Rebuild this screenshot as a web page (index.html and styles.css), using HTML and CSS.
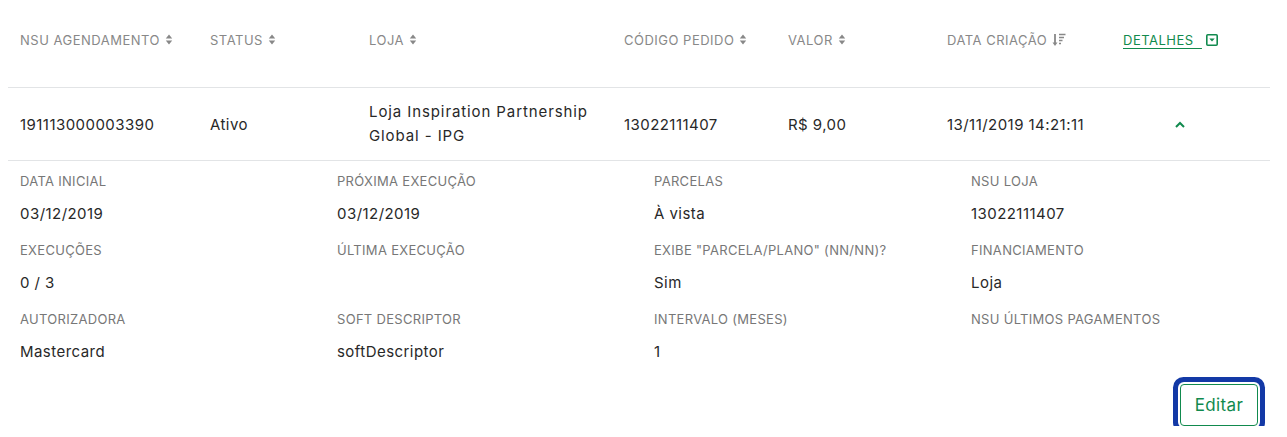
FILE: index.html
```html
<!DOCTYPE html>
<html lang="pt-BR">
<head>
<meta charset="utf-8">
<title>Agendamentos</title>
<link rel="stylesheet" href="styles.css">
</head>
<body>
<div class="table">
  <div class="row head">
    <div class="cell c1">NSU AGENDAMENTO <svg class="sort" viewBox="0 0 8 12"><path d="M4 0.5L7.5 5H0.5Z M4 11.5L7.5 7H0.5Z"/></svg></div>
    <div class="cell c2">STATUS <svg class="sort" viewBox="0 0 8 12"><path d="M4 0.5L7.5 5H0.5Z M4 11.5L7.5 7H0.5Z"/></svg></div>
    <div class="cell c3">LOJA <svg class="sort" viewBox="0 0 8 12"><path d="M4 0.5L7.5 5H0.5Z M4 11.5L7.5 7H0.5Z"/></svg></div>
    <div class="cell c4">CÓDIGO PEDIDO <svg class="sort" viewBox="0 0 8 12"><path d="M4 0.5L7.5 5H0.5Z M4 11.5L7.5 7H0.5Z"/></svg></div>
    <div class="cell c5">VALOR <svg class="sort" viewBox="0 0 8 12"><path d="M4 0.5L7.5 5H0.5Z M4 11.5L7.5 7H0.5Z"/></svg></div>
    <div class="cell c6">DATA CRIAÇÃO <svg class="sortamt" viewBox="0 0 14 14"><path d="M3 1v9.5" stroke="#888" stroke-width="1.8" fill="none"/><path d="M0.5 9.5h5L3 13z" fill="#888"/><path d="M7 1.5h6.5M7 4.5h5M7 7.5h3.5M7 10.5h2" stroke="#888" stroke-width="1.6" fill="none"/></svg></div>
    <div class="cell c7"><a class="details" href="#">DETALHES&nbsp;&nbsp;</a><svg class="detbox" viewBox="0 0 12 12"><rect x="0.8" y="0.8" width="10.4" height="10.4" rx="1" fill="none" stroke="#118a4e" stroke-width="1.6"/><path d="M3.3 4.5h5.4L6 7.6z" fill="#118a4e"/></svg></div>
  </div>
  <div class="row body">
    <div class="cell c1">191113000003390</div>
    <div class="cell c2">Ativo</div>
    <div class="cell c3 store">Loja Inspiration Partnership Global - IPG</div>
    <div class="cell c4">13022111407</div>
    <div class="cell c5">R$ 9,00</div>
    <div class="cell c6">13/11/2019 14:21:11</div>
    <div class="cell c7"><svg class="chev" viewBox="0 0 10 7"><path d="M1 6L5 2L9 6" fill="none" stroke="#118a4e" stroke-width="2"/></svg></div>
  </div>
  <div class="detail">
    <div class="grid">
      <div class="item"><div class="label">DATA INICIAL</div><div class="value">03/12/2019</div></div>
      <div class="item"><div class="label">PRÓXIMA EXECUÇÃO</div><div class="value">03/12/2019</div></div>
      <div class="item"><div class="label">PARCELAS</div><div class="value">À vista</div></div>
      <div class="item"><div class="label">NSU LOJA</div><div class="value">13022111407</div></div>
      <div class="item"><div class="label">EXECUÇÕES</div><div class="value">0 / 3</div></div>
      <div class="item"><div class="label">ÚLTIMA EXECUÇÃO</div><div class="value"></div></div>
      <div class="item"><div class="label">EXIBE "PARCELA/PLANO" (NN/NN)?</div><div class="value">Sim</div></div>
      <div class="item"><div class="label">FINANCIAMENTO</div><div class="value">Loja</div></div>
      <div class="item"><div class="label">AUTORIZADORA</div><div class="value">Mastercard</div></div>
      <div class="item"><div class="label">SOFT DESCRIPTOR</div><div class="value">softDescriptor</div></div>
      <div class="item"><div class="label">INTERVALO (MESES)</div><div class="value">1</div></div>
      <div class="item"><div class="label">NSU ÚLTIMOS PAGAMENTOS</div><div class="value"></div></div>
    </div>
    <div class="actions"><button class="edit">Editar</button></div>
  </div>
</div>
</body>
</html>
```
FILE: styles.css
```css
html, body {
  margin: 0;
  background: #fff;
}
body {
  padding: 0 8px;
  font-family: Inter, "Noto Sans", sans-serif;
  color: #222;
}
.table {
  width: 1262px;
}
.row {
  display: flex;
  align-items: center;
  border-bottom: 1px solid #e2e4e6;
}
.head {
  box-sizing: border-box;
  height: 88px;
  padding-bottom: 8px;
  font-size: 13px;
  color: #888;
  letter-spacing: 0.5px;
}
.body {
  height: 72px;
  font-size: 15px;
  color: #282828;
  letter-spacing: 0.45px;
}
.cell {
  padding-left: 12px;
  box-sizing: border-box;
  display: flex;
  align-items: center;
}
.c1 { width: 190px; }
.c2 { width: 159px; }
.c3 { width: 255px; }
.c4 { width: 164px; }
.c5 { width: 159px; }
.c6 { width: 176px; }
.c7 { flex: 1; }
.store {
  line-height: 24px;
  padding-right: 16px;
  letter-spacing: 0.9px;
}
.sort {
  width: 8px;
  height: 11px;
  margin-left: 5px;
  fill: #888;
}
.sortamt {
  width: 14px;
  height: 14px;
  margin-left: 5px;
}
.details {
  color: #118a4e;
  text-decoration: underline;
  text-underline-offset: 3px;
}
.detbox {
  width: 12px;
  height: 12px;
  margin-left: 4px;
}
.body .c7 { padding-left: 64px; }
.chev {
  width: 10px;
  height: 7px;
}
.detail {
  padding: 11px 12px 0 12px;
}
.grid {
  display: grid;
  grid-template-columns: repeat(4, 317px);
  row-gap: 14px;
}
.label {
  font-size: 13px;
  color: #777;
  line-height: 18px;
  letter-spacing: 0.3px;
}
.value {
  margin-top: 11px;
  font-size: 15px;
  color: #282828;
  line-height: 26px;
  height: 26px;
  letter-spacing: 0.45px;
}
.actions {
  display: flex;
  justify-content: flex-end;
  padding-top: 19px;
}
.edit {
  width: 78px;
  height: 42px;
  border: 1px solid #118a4e;
  border-radius: 4px;
  background: #fff;
  color: #118a4e;
  font-family: Inter, "Noto Sans", sans-serif;
  font-size: 17px;
  letter-spacing: 0.4px;
  box-shadow: 0 0 0 2px #fff, 0 0 0 7px #1339a6;
}
```
